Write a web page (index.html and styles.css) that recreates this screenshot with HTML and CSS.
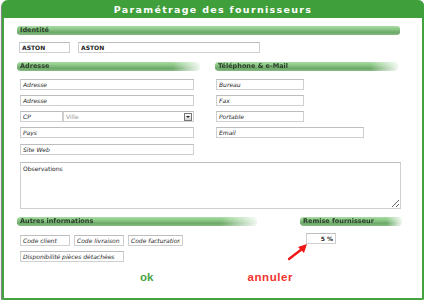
FILE: index.html
```html
<!DOCTYPE html>
<html lang="fr">
<head>
    <meta charset="UTF-8">
    <title>Paramétrage des fournisseurs</title>
    <link rel="stylesheet" href="styles.css">
</head>
<body>
    <div class="cadre">
        <div class="titre">Paramétrage des fournisseurs</div>
        <div class="contenu">
            <div class="entete large">Identité</div>
            <div class="ligne ident">
                <input type="text" class="code" value="ASTON">
                <input type="text" class="nom" value="ASTON">
            </div>

            <div class="colonnes">
                <div class="col">
                    <div class="entete">Adresse</div>
                    <div class="champs">
                        <input type="text" class="long" placeholder="Adresse">
                        <input type="text" class="long" placeholder="Adresse">
                        <div class="ligne">
                            <input type="text" class="cp" placeholder="CP">
                            <div class="liste">
                                <span class="vide">Ville</span>
                                <span class="fleche"></span>
                            </div>
                        </div>
                        <input type="text" class="long" placeholder="Pays">
                        <input type="text" class="long web" placeholder="Site Web">
                    </div>
                </div>
                <div class="col">
                    <div class="entete">Téléphone &amp; e-Mail</div>
                    <div class="champs droite">
                        <input type="text" class="court" placeholder="Bureau">
                        <input type="text" class="court" placeholder="Fax">
                        <input type="text" class="court" placeholder="Portable">
                        <input type="text" class="mail" placeholder="Email">
                    </div>
                </div>
            </div>

            <textarea class="obs" placeholder="Observations"></textarea>

            <div class="bas">
                <div class="autres">
                    <div class="entete">Autres informations</div>
                    <div class="ligne codes">
                        <input type="text" class="c1" placeholder="Code client">
                        <input type="text" class="c1" placeholder="Code livraison">
                        <input type="text" class="c2" placeholder="Code facturation">
                    </div>
                    <input type="text" class="dispo" placeholder="Disponibilité pièces détachées">
                </div>
                <div class="remise">
                    <div class="entete">Remise fournisseur</div>
                    <input type="text" class="taux" value="5 %">
                    <svg class="fleche-rouge" width="22" height="18" viewBox="0 0 22 18">
                        <line x1="2" y1="16" x2="15" y2="6" stroke="#f01818" stroke-width="2.4" stroke-linecap="round"/>
                        <polygon points="20,1 11,4 17,10" fill="#f01818"/>
                    </svg>
                </div>
            </div>

            <div class="boutons">
                <button class="ok">ok</button>
                <button class="annuler">annuler</button>
            </div>
        </div>
    </div>
</body>
</html>
```

FILE: styles.css
```css
body {
    margin: 0;
    background: #fff;
    font-family: "DejaVu Sans", Verdana, sans-serif;
}
.cadre {
    margin-left: 2px;
    width: 418px;
    height: 298px;
    border: 2px solid #43a33f;
    border-top: none;
    border-radius: 6px 6px 2px 2px;
    box-shadow: -1px 1px 1px #777;
}
.titre {
    height: 18px;
    margin: 0 -2px;
    background: #3f9f3b;
    border-radius: 6px 6px 0 0;
    color: #fff;
    font-weight: bold;
    font-size: 9.5px;
    letter-spacing: 1.3px;
    line-height: 19px;
    text-align: center;
}
.contenu {
    padding: 8px 0 0 13px;
}
.entete {
    height: 9px;
    padding-left: 3px;
    border-radius: 3px;
    background: linear-gradient(#a9dca4 0%, #8cc887 35%, #6ea86a 70%, #86bb82 100%);
    color: #2a3f29;
    font-size: 6.5px;
    font-weight: bold;
    line-height: 9px;
    -webkit-mask-image: linear-gradient(to right, #000 85%, rgba(0,0,0,0.1));
    mask-image: linear-gradient(to right, #000 85%, rgba(0,0,0,0.1));
}
.large {
    width: 380px;
    -webkit-mask-image: none;
    mask-image: none;
}
input, textarea, .liste {
    box-sizing: border-box;
    height: 11px;
    margin: 0;
    padding: 0 2px;
    border: 1px solid #cfcfcf;
    border-top-color: #bdbdbd;
    background: #fff;
    font-family: "DejaVu Sans", Verdana, sans-serif;
    font-size: 6px;
    font-style: italic;
    color: #1e1e1e;
    outline: none;
}
input::placeholder, textarea::placeholder {
    color: #1e1e1e;
    opacity: 1;
}
.ligne {
    display: flex;
}
.ident {
    gap: 8px;
    margin: 7px 0 0 2px;
}
.ident input {
    font-style: normal;
    font-weight: bold;
}
.code { width: 51px; }
.nom { width: 182px; }
.colonnes {
    display: flex;
    gap: 15px;
    margin-top: 9px;
}
.col {
    width: 183px;
}
.champs {
    display: flex;
    flex-direction: column;
    align-items: flex-start;
    gap: 5px;
    padding: 8px 0 0 3px;
}
.champs.droite {
    padding-left: 1px;
}
.long { width: 174px; }
.web { margin-top: 1px; }
.cp { width: 43px; }
.liste {
    display: flex;
    align-items: center;
    justify-content: space-between;
    width: 131px;
    padding-right: 1px;
    color: #9a9a9a;
    font-style: normal;
}
.fleche {
    width: 6px;
    height: 6px;
    border: 1px solid #777;
    background: linear-gradient(#fafafa, #d6d6d6);
    position: relative;
}
.fleche::after {
    content: "";
    position: absolute;
    left: 1px;
    top: 2px;
    border-left: 2px solid transparent;
    border-right: 2px solid transparent;
    border-top: 2px solid #222;
}
.court { width: 88px; }
.mail { width: 148px; }
.obs {
    display: block;
    width: 381px;
    height: 47px;
    margin: 7px 0 0 3px;
    padding: 2px;
    font-style: normal;
    resize: vertical;
}
.bas {
    display: flex;
    margin-top: 8px;
}
.autres {
    width: 240px;
}
.codes {
    gap: 4px;
    margin: 9px 0 5px 3px;
}
.c1 { width: 50px; }
.c2 { width: 55px; }
.dispo {
    display: block;
    width: 104px;
    margin-left: 3px;
}
.remise {
    position: relative;
    width: 102px;
    margin-left: 43px;
}
.taux {
    display: block;
    width: 30px;
    margin: 7px 0 0 6px;
    font-style: normal;
    font-weight: bold;
    text-align: right;
}
.fleche-rouge {
    position: absolute;
    left: -13px;
    top: 26px;
}
.boutons {
    display: flex;
    margin-top: 9px;
}
button {
    border: none;
    background: none;
    padding: 0;
    cursor: pointer;
    font-family: "Liberation Sans", Arial, sans-serif;
    font-weight: bold;
    font-size: 11.5px;
    line-height: 12px;
}
.ok {
    margin-left: 123px;
    color: #4aa547;
}
.annuler {
    margin-left: 94px;
    color: #f2322c;
    letter-spacing: 0.6px;
}
```
